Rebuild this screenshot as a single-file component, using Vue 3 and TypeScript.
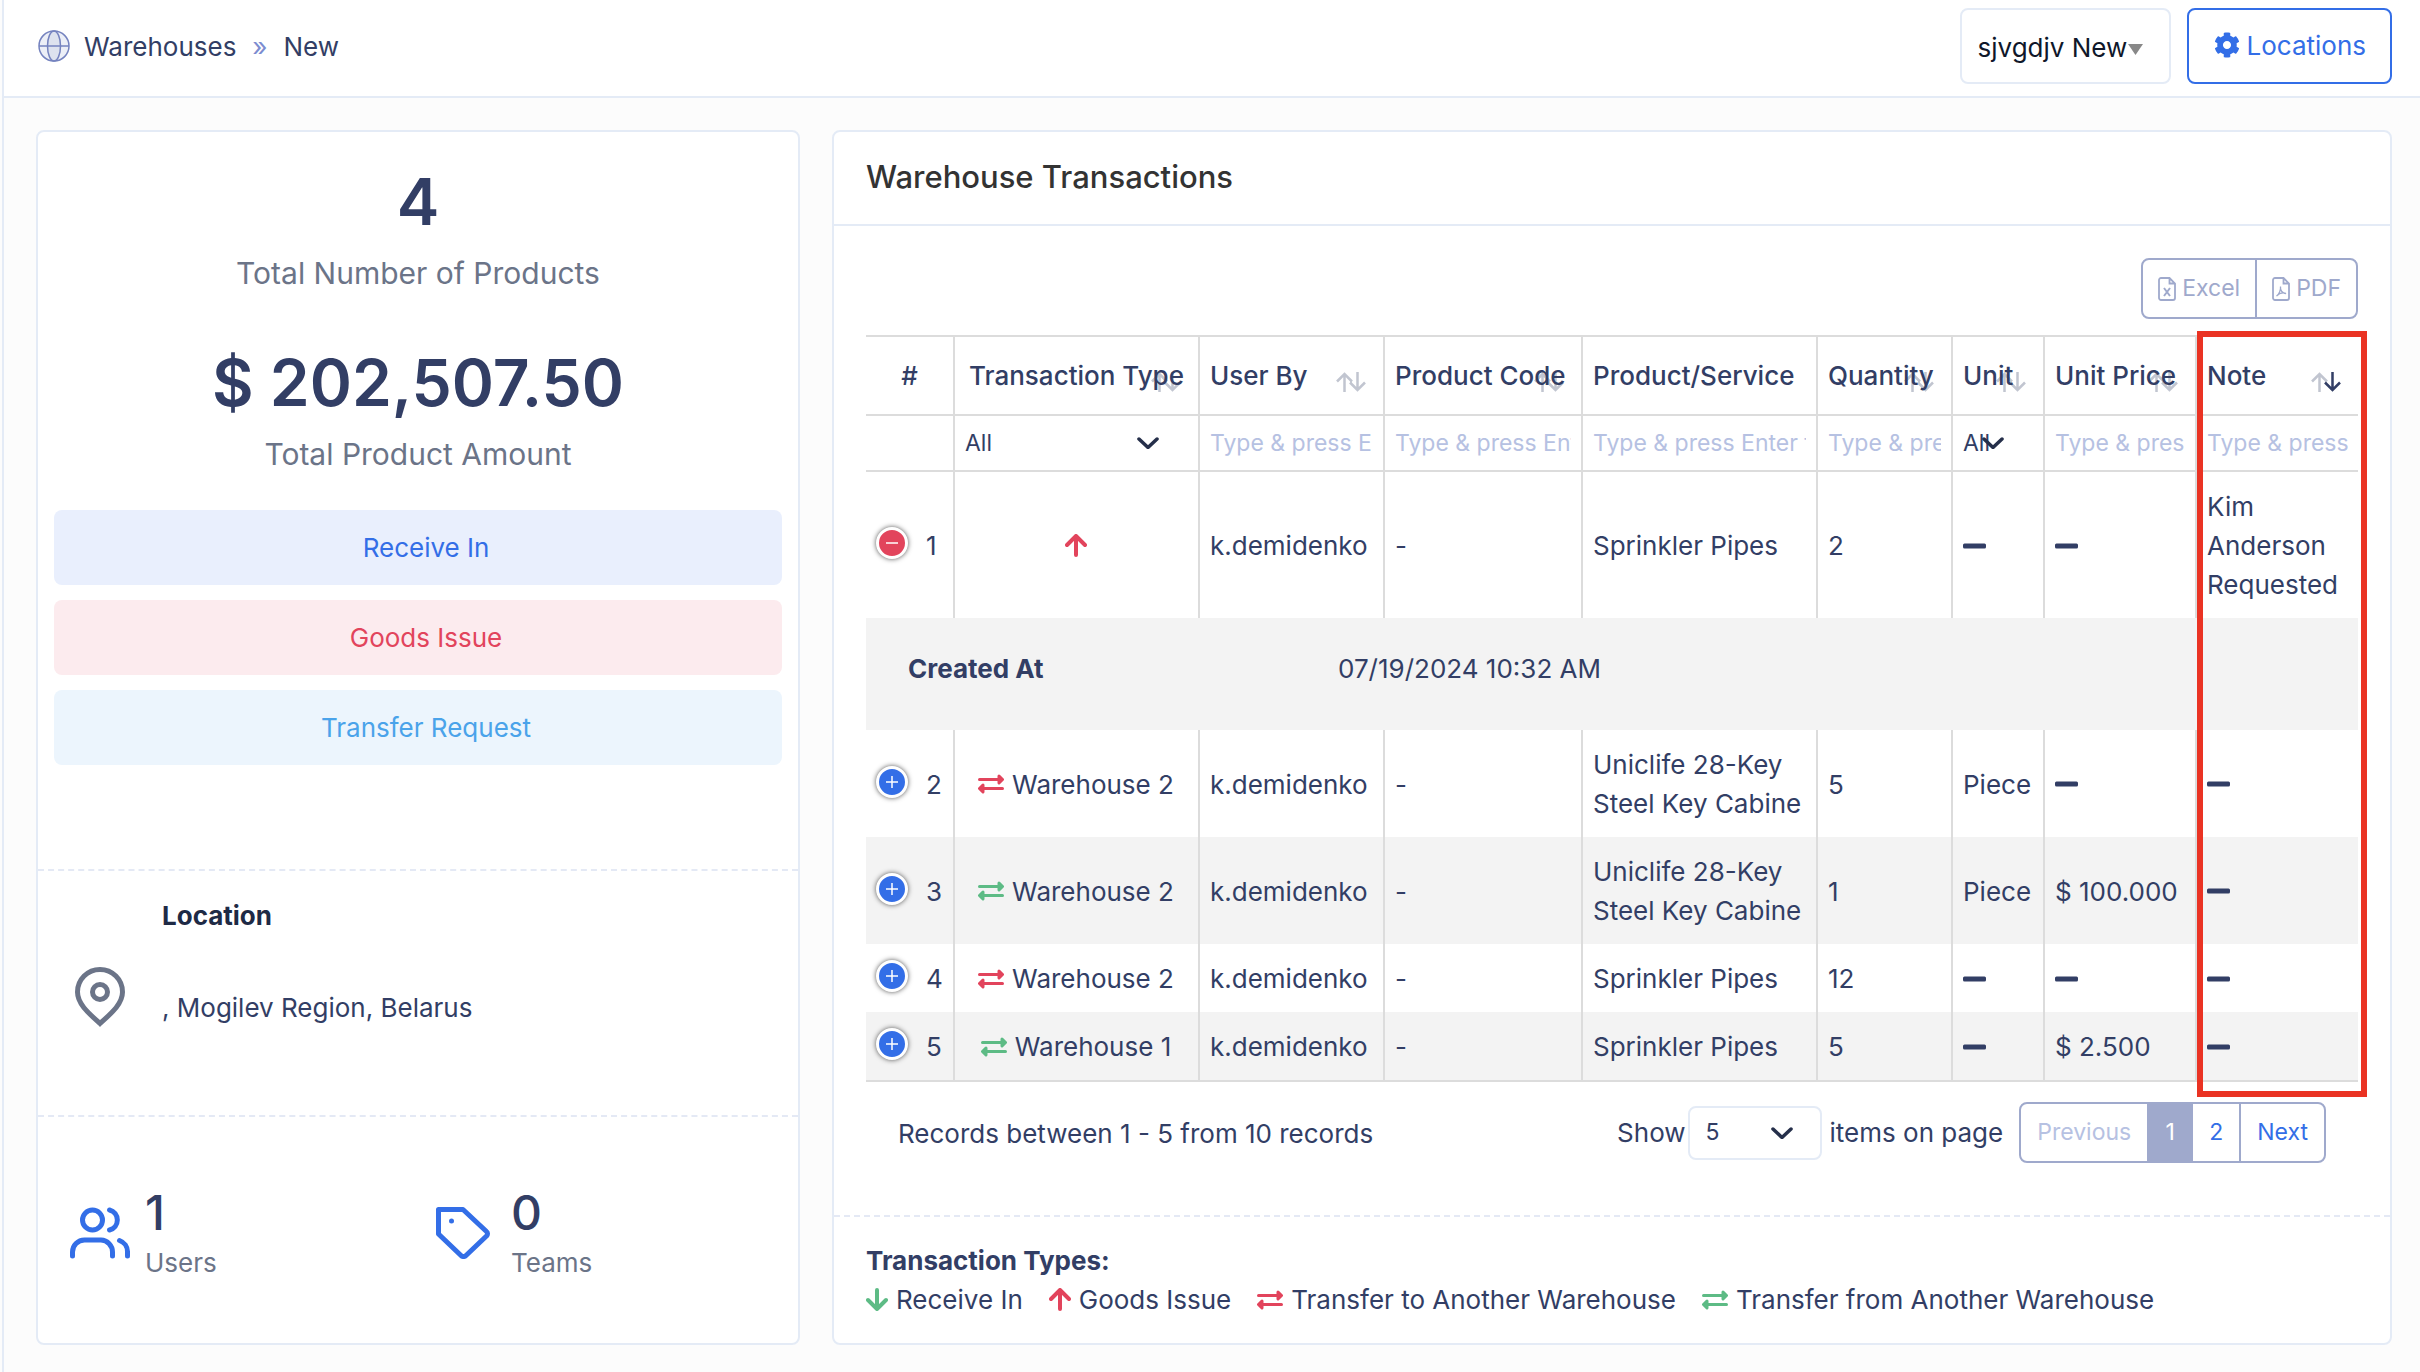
<script setup lang="ts">
import { ref } from 'vue'

type Kind = 'in' | 'out' | 'to' | 'from'

interface Column {
  label: string
  width: number
  filter: 'none' | 'select' | 'text'
  sort: 'none' | 'idle' | 'desc'
  centered?: boolean
}

interface Row {
  id: number
  kind: Kind
  target: string
  user: string
  code: string
  product: string
  quantity: string
  unit: string
  price: string
  note: string
  createdAt?: string
}

const columns: Column[] = [
  { label: '#', width: 89, filter: 'none', sort: 'none', centered: true },
  { label: 'Transaction Type', width: 245, filter: 'select', sort: 'idle', centered: true },
  { label: 'User By', width: 185, filter: 'text', sort: 'idle' },
  { label: 'Product Code', width: 198, filter: 'text', sort: 'idle' },
  { label: 'Product/Service', width: 235, filter: 'text', sort: 'none' },
  { label: 'Quantity', width: 135, filter: 'text', sort: 'idle' },
  { label: 'Unit', width: 92, filter: 'select', sort: 'idle' },
  { label: 'Unit Price', width: 152, filter: 'text', sort: 'idle' },
  { label: 'Note', width: 161, filter: 'text', sort: 'desc' },
]

const rows: Row[] = [
  { id: 1, kind: 'out', target: '', user: 'k.demidenko', code: '-', product: 'Sprinkler Pipes', quantity: '2', unit: '', price: '', note: 'Kim Anderson Requested', createdAt: '07/19/2024 10:32 AM' },
  { id: 2, kind: 'to', target: 'Warehouse 2', user: 'k.demidenko', code: '-', product: 'Uniclife 28-Key Steel Key Cabine', quantity: '5', unit: 'Piece', price: '', note: '' },
  { id: 3, kind: 'from', target: 'Warehouse 2', user: 'k.demidenko', code: '-', product: 'Uniclife 28-Key Steel Key Cabine', quantity: '1', unit: 'Piece', price: '$ 100.000', note: '' },
  { id: 4, kind: 'to', target: 'Warehouse 2', user: 'k.demidenko', code: '-', product: 'Sprinkler Pipes', quantity: '12', unit: '', price: '', note: '' },
  { id: 5, kind: 'from', target: 'Warehouse 1', user: 'k.demidenko', code: '-', product: 'Sprinkler Pipes', quantity: '5', unit: '', price: '$ 2.500', note: '' },
]

const legend: { kind: Kind; label: string }[] = [
  { kind: 'in', label: 'Receive In' },
  { kind: 'out', label: 'Goods Issue' },
  { kind: 'to', label: 'Transfer to Another Warehouse' },
  { kind: 'from', label: 'Transfer from Another Warehouse' },
]

const arrowPaths: Record<'in' | 'out', string> = {
  in: 'M11 2V21M2 12L11 21L20 12',
  out: 'M11 21V2M2 11L11 2L20 11',
}

const openRow = ref(1)
const toggle = (id: number) => {
  openRow.value = openRow.value === id ? 0 : id
}
const cells = (row: Row) => [row.user, row.code, row.product, row.quantity, row.unit, row.price, row.note]
</script>

<template>
  <div class="page">
    <header class="topbar">
      <nav class="crumbs" aria-label="Breadcrumb">
        <svg class="globe" viewBox="0 0 32 32" width="32" height="32" aria-hidden="true">
          <circle cx="16" cy="16" r="15" fill="#eceff7" />
          <ellipse cx="16" cy="16" rx="7" ry="15" fill="#dde2ee" />
          <g fill="none" stroke="#7583bf" stroke-width="1.5">
            <circle cx="16" cy="16" r="15" />
            <ellipse cx="16" cy="16" rx="6.5" ry="15" />
            <path d="M1 16H31" />
          </g>
        </svg>
        <a href="#warehouses">Warehouses</a>
        <span class="sep">»</span>
        <span>New</span>
      </nav>
      <div class="top-actions">
        <div class="site-picker">
          <select aria-label="Warehouse">
            <option>sjvgdjv New</option>
          </select>
          <svg viewBox="0 0 15 11" width="15" height="11" aria-hidden="true"><path d="M0 0H15L7.500 11Z" fill="#888" /></svg>
        </div>
        <button class="locations" type="button">
          <svg viewBox="0 0 512 512" width="26" height="26" fill="currentColor" aria-hidden="true">
            <path d="M487.4 315.7l-42.6-24.6c4.3-23.2 4.3-47 0-70.2l42.6-24.6c4.9-2.8 7.1-8.6 5.5-14-11.1-35.6-30-67.8-54.7-94.6-3.8-4.1-10-5.1-14.8-2.3L380.8 110c-17.9-15.4-38.5-27.3-60.8-35.1V25.8c0-5.6-3.9-10.5-9.4-11.7-36.7-8.2-74.3-7.8-109.2 0-5.5 1.2-9.4 6.1-9.4 11.7V75c-22.2 7.9-42.8 19.8-60.8 35.1L88.7 85.5c-4.9-2.8-11-1.9-14.8 2.3-24.7 26.7-43.6 58.9-54.7 94.6-1.7 5.4.6 11.2 5.5 14L67.3 221c-4.3 23.2-4.3 47 0 70.2l-42.6 24.6c-4.9 2.8-7.1 8.6-5.5 14 11.1 35.6 30 67.8 54.7 94.6 3.8 4.1 10 5.1 14.8 2.3l42.6-24.6c17.9 15.4 38.5 27.3 60.8 35.1v49.2c0 5.6 3.9 10.5 9.4 11.7 36.7 8.2 74.3 7.8 109.2 0 5.5-1.2 9.4-6.1 9.4-11.7v-49.2c22.2-7.9 42.8-19.8 60.8-35.1l42.6 24.6c4.9 2.8 11 1.9 14.8-2.3 24.7-26.7 43.6-58.9 54.7-94.6 1.5-5.5-.7-11.3-5.6-14.1zM256 336c-44.1 0-80-35.9-80-80s35.9-80 80-80 80 35.9 80 80-35.9 80-80 80z" />
          </svg>
          Locations
        </button>
      </div>
    </header>

    <main class="content">
      <section class="card summary">
        <div class="totals">
          <div class="total">
            <strong>4</strong>
            <span>Total Number of Products</span>
          </div>
          <div class="total">
            <strong>$ 202,507.50</strong>
            <span>Total Product Amount</span>
          </div>
          <div class="actions">
            <button type="button" class="soft blue">Receive In</button>
            <button type="button" class="soft red">Goods Issue</button>
            <button type="button" class="soft sky">Transfer Request</button>
          </div>
        </div>
        <div class="location">
          <svg viewBox="0 0 50 60" width="50" height="60" fill="none" stroke="#6b7488" stroke-width="5" aria-hidden="true">
            <path d="M25 56.5C14 46.500 2.500 37 2.500 25A22.500 22.500 0 0 1 47.500 25C47.500 37 36 46.500 25 56.500Z" />
            <circle cx="25" cy="25" r="7.500" />
          </svg>
          <div class="address">
            <h2>Location</h2>
            <p>, Mogilev Region, Belarus</p>
          </div>
        </div>
        <div class="counts">
          <div class="count">
            <svg viewBox="0 0 60 52" width="60" height="52" fill="none" stroke="#336ee7" stroke-width="5" stroke-linecap="round" aria-hidden="true">
              <circle cx="22.5" cy="13" r="10" />
              <path d="M2.5 49V45A12 12 0 0 1 14.500 33H31A12 12 0 0 1 42.500 45V49M39.500 3A10.300 10.300 0 0 1 39.500 23M49.500 33.500A12 12 0 0 1 57.500 45V49" />
            </svg>
            <div>
              <strong>1</strong>
              <span>Users</span>
            </div>
          </div>
          <div class="count">
            <svg viewBox="0 0 60 52" width="60" height="52" fill="none" stroke="#336ee7" stroke-width="5" stroke-linejoin="round" aria-hidden="true">
              <path d="M2.500 2.500H27L50.500 24.500A3 3 0 0 1 50.500 29L30 48.500A3.500 3.500 0 0 1 25 48.500L2.500 27Z" />
              <circle cx="15.500" cy="14" r="2.500" fill="#336ee7" stroke="none" />
            </svg>
            <div>
              <strong>0</strong>
              <span>Teams</span>
            </div>
          </div>
        </div>
      </section>

      <section class="card transactions">
        <h1>Warehouse Transactions</h1>
        <div class="body">
          <div class="export">
            <button type="button">
              <svg viewBox="0 0 18 24" width="18" height="24" fill="none" stroke="currentColor" stroke-width="1.800" aria-hidden="true">
                <path d="M3 1H11.500L17 6.500V21A2 2 0 0 1 15 23H3A2 2 0 0 1 1 21V3A2 2 0 0 1 3 1ZM11.500 1V6.500H17" />
                <path d="M6 11L12 19M12 11L6 19" stroke-width="2" />
              </svg>
              Excel
            </button>
            <button type="button">
              <svg viewBox="0 0 18 24" width="18" height="24" fill="none" stroke="currentColor" stroke-width="1.800" aria-hidden="true">
                <path d="M3 1H11.500L17 6.500V21A2 2 0 0 1 15 23H3A2 2 0 0 1 1 21V3A2 2 0 0 1 3 1ZM11.500 1V6.500H17" />
                <path d="M8.500 9.500C8 13.500 10.500 16.500 14 16.500C10 15 7 16.500 4.500 19C7 17.500 9 13 8.500 9.500" stroke-width="1.300" />
              </svg>
              PDF
            </button>
          </div>

          <div class="table-wrap">
            <table>
              <colgroup>
                <col v-for="c in columns" :key="c.label" :style="{ width: c.width + 'px' }" />
              </colgroup>
              <thead>
                <tr class="heads">
                  <th v-for="c in columns" :key="c.label" scope="col" :class="{ centered: c.centered }">
                    {{ c.label }}
                    <svg v-if="c.sort !== 'none'" class="sort" viewBox="0 0 30 20" width="30" height="20" fill="none" stroke="#323e65" stroke-width="2.500" aria-hidden="true">
                      <path d="M8.500 20V2M1 9.500L8.500 2L16 9.500" opacity="0.3" />
                      <path d="M21.500 0V18M14 10.500L21.500 18L29 10.500" :opacity="c.sort === 'desc' ? 1 : 0.3" />
                    </svg>
                  </th>
                </tr>
                <tr class="filters">
                  <td v-for="c in columns" :key="c.label">
                    <div v-if="c.filter === 'select'" class="picker">
                      <select :aria-label="c.label + ' filter'">
                        <option>All</option>
                      </select>
                      <svg class="chevron" viewBox="0 0 22 12" width="22" height="12" aria-hidden="true"><path d="M2 2L11 10.500L20 2" /></svg>
                    </div>
                    <input v-else-if="c.filter === 'text'" type="text" placeholder="Type &amp; press Enter for search" :aria-label="c.label + ' filter'" />
                  </td>
                </tr>
              </thead>
              <tbody>
                <template v-for="row in rows" :key="row.id">
                  <tr :class="{ striped: row.id === 3 || row.id === 5 }">
                    <td class="index">
                      <div>
                        <button type="button" :class="{ open: openRow === row.id }" :aria-label="'Details of row ' + row.id" @click="toggle(row.id)">
                          <svg viewBox="0 0 14 14" width="14" height="14" fill="none" stroke="#fff" stroke-width="1.500" aria-hidden="true">
                            <path :d="openRow === row.id ? 'M1 7H13' : 'M1 7H13M7 1V13'" />
                          </svg>
                        </button>
                        <span>{{ row.id }}</span>
                      </div>
                    </td>
                    <td class="type">
                      <span class="kind" :class="row.kind">
                        <svg v-if="row.kind === 'out' || row.kind === 'in'" viewBox="0 0 22 23" width="22" height="23" aria-hidden="true"><path class="arrow" :d="arrowPaths[row.kind]" /></svg>
                        <svg v-else viewBox="0 0 26 20" width="26" height="20" aria-hidden="true"><path class="swap" d="M1.500 5.500H21M24.500 14.500H5M21 2L24.500 5.500L21 9ZM5 11L1.500 14.500L5 18Z" /></svg>
                        <span v-if="row.target">{{ row.target }}</span>
                      </span>
                    </td>
                    <td v-for="(value, i) in cells(row)" :key="i">
                      <template v-if="value">{{ value }}</template>
                      <svg v-else class="dash" viewBox="0 0 23 6" width="23" height="6" role="img" aria-label="None"><rect width="23" height="5" y="0.500" rx="1.500" fill="#323e65" /></svg>
                    </td>
                  </tr>
                  <tr v-if="openRow === row.id && row.createdAt" class="detail">
                    <td colspan="9">
                      <dl>
                        <dt>Created At</dt>
                        <dd>{{ row.createdAt }}</dd>
                      </dl>
                    </td>
                  </tr>
                </template>
              </tbody>
            </table>
            <div class="marker"></div>
          </div>

          <div class="footer">
            <span class="records">Records between 1 - 5 from 10 records</span>
            <label class="page-size">
              Show
              <span class="picker boxed">
                <select>
                  <option>5</option>
                </select>
                <svg class="chevron" viewBox="0 0 22 12" width="22" height="12" aria-hidden="true"><path d="M2 2L11 10.500L20 2" /></svg>
              </span>
              <span class="suffix">items on page</span>
            </label>
            <nav class="pager" aria-label="Pages">
              <button type="button" disabled>Previous</button>
              <button type="button" class="current" aria-current="page">1</button>
              <button type="button">2</button>
              <button type="button">Next</button>
            </nav>
          </div>
        </div>
        <div class="legend">
          <h2>Transaction Types:</h2>
          <ul>
            <li v-for="item in legend" :key="item.kind" class="kind" :class="item.kind">
              <svg v-if="item.kind === 'out' || item.kind === 'in'" viewBox="0 0 22 23" width="22" height="23" aria-hidden="true"><path class="arrow" :d="arrowPaths[item.kind]" /></svg>
              <svg v-else viewBox="0 0 26 20" width="26" height="20" aria-hidden="true"><path class="swap" d="M1.500 5.500H21M24.500 14.500H5M21 2L24.500 5.500L21 9ZM5 11L1.500 14.500L5 18Z" /></svg>
              <span>{{ item.label }}</span>
            </li>
          </ul>
        </div>
      </section>
    </main>
  </div>
</template>

<style>
body {
  background: #fcfcfc;
}
</style>

<style scoped>
.page {
  box-sizing: border-box;
  min-height: 100vh;
  margin-left: 2px;
  border-left: 2px solid #e4ebf6;
  color: #323e65;
  font: 26px/39px Inter, "Liberation Sans", sans-serif;
}
.page *,
.page *::before {
  box-sizing: border-box;
}
h1, h2, p, dl, dd, ul {
  margin: 0;
  padding: 0;
}
button, select, input {
  font: inherit;
  color: inherit;
  margin: 0;
  padding: 0;
  border: 0;
  background: none;
  border-radius: 0;
  outline: none;
  cursor: pointer;
}
select {
  appearance: none;
}
svg {
  display: block;
  flex: none;
}

.topbar {
  display: flex;
  justify-content: space-between;
  padding: 8px 28px 12px 34px;
  background: #fff;
  border-bottom: 2px solid #e4ebf6;
}
.crumbs {
  display: flex;
  align-items: center;
}
.crumbs a {
  color: inherit;
  text-decoration: none;
}
.globe {
  margin-right: 14px;
}
.sep {
  margin: 0 16px;
  color: #7c8cd0;
}
.top-actions {
  display: flex;
  gap: 16px;
}
.site-picker {
  position: relative;
  display: flex;
}
.site-picker select {
  width: 211px;
  height: 76px;
  padding: 2px 0 0 16px;
  border: 2px solid #e4ebf6;
  border-radius: 8px;
  color: #0f172a;
}
.site-picker svg {
  position: absolute;
  right: 28px;
  top: 36px;
  pointer-events: none;
}
.locations {
  display: flex;
  align-items: center;
  gap: 7px;
  height: 76px;
  padding: 0 24px 2px 25px;
  border: 2px solid #336ee7;
  border-radius: 8px;
  color: #336ee7;
}

.content {
  display: grid;
  grid-template-columns: calc((100% - 64px) / 3) minmax(0, 1fr);
  gap: 32px;
  padding: 32px 28px 27px 32px;
}
.card {
  background: #fff;
  border: 2px solid #e4ebf6;
  border-radius: 8px;
}

.summary {
  display: flex;
  flex-direction: column;
}
.totals {
  flex: 1;
  padding: 31px 16px 0;
}
.total {
  display: flex;
  flex-direction: column;
  align-items: center;
  gap: 10px;
  margin-bottom: 48px;
}
.total strong {
  font-size: 64px;
  font-weight: 600;
  line-height: 78px;
}
.total span {
  font-size: 30px;
  line-height: 45px;
  color: #6b7488;
}
.actions {
  display: flex;
  flex-direction: column;
  gap: 15px;
  margin-top: -15px;
}
.soft {
  height: 75px;
  padding: 0 0 1px 16px;
  border-radius: 8px;
}
.blue {
  background: #e9effd;
  color: #336ee7;
}
.red {
  background: #fcebee;
  color: #e2445c;
}
.sky {
  background: #ecf5fd;
  color: #4aa3ea;
}
.location {
  display: flex;
  align-items: flex-end;
  gap: 37px;
  padding: 25px 37px 88px;
  border-top: 2px dashed #e4e9f5;
}
.address {
  display: flex;
  flex-direction: column;
  gap: 53px;
}
.address h2 {
  font: inherit;
  font-weight: 700;
  color: #1e2a45;
}
.counts {
  display: grid;
  grid-template-columns: 1fr 1fr;
  column-gap: 4px;
  padding: 66px 0 61px 32px;
  border-top: 2px dashed #e4e9f5;
}
.count {
  display: flex;
  align-items: center;
  gap: 15px;
}
.count div {
  display: flex;
  flex-direction: column;
}
.count strong {
  font-size: 48px;
  font-weight: 500;
  line-height: 60px;
}
.count span {
  color: #6b7488;
}

.transactions {
  display: flex;
  flex-direction: column;
}
.transactions h1 {
  padding: 25px 32px 28px;
  border-bottom: 2px solid #e4ebf6;
  font: inherit;
  font-size: 31px;
  font-weight: 500;
  color: #333;
}
.body {
  flex: 1;
  padding: 32px 32px 0;
}
.export {
  display: flex;
  justify-content: flex-end;
  margin-bottom: 16px;
  font-size: 23px;
  color: #9fa9cc;
}
.export button {
  display: flex;
  align-items: center;
  gap: 6px;
  height: 61px;
  padding: 0 15px;
  border: 2px solid #9fa9cc;
}
.export button:first-child {
  border-radius: 8px 0 0 8px;
}
.export button:last-child {
  margin-left: -2px;
  border-radius: 0 8px 8px 0;
}

.table-wrap {
  position: relative;
}
table {
  width: 100%;
  table-layout: fixed;
  border-collapse: separate;
  border-spacing: 0;
  border-top: 2px solid #dcdcdc;
  border-bottom: 2px solid #dcdcdc;
}
th, td {
  padding: 15px 6px 14px 10px;
  border-right: 2px solid #dcdcdc;
  text-align: left;
  vertical-align: middle;
}
th:last-child, td:last-child {
  border-right: 0;
}
.heads th {
  position: relative;
  height: 79px;
  padding: 0 10px;
  border-bottom: 2px solid #dcdcdc;
  font-weight: 500;
  white-space: nowrap;
}
.heads .centered {
  text-align: center;
}
.sort {
  position: absolute;
  right: 17px;
  top: 35px;
}
.filters td {
  height: 56px;
  padding: 0 10px;
  border-bottom: 2px solid #dcdcdc;
  font-size: 23px;
  line-height: 36px;
}
.filters input, .picker select {
  display: block;
  width: 100%;
  height: 36px;
}
.filters input::placeholder {
  color: #b6c1e2;
  opacity: 1;
}
.picker {
  position: relative;
}
.chevron {
  position: absolute;
  right: 29px;
  top: 12px;
  pointer-events: none;
}
.chevron path {
  fill: none;
  stroke: #252f4a;
  stroke-width: 3.5;
  stroke-linecap: round;
  stroke-linejoin: round;
}
.striped td, .detail td {
  background: #f3f3f3;
}
.index div {
  display: flex;
  align-items: center;
  gap: 18px;
}
.index button {
  display: flex;
  align-items: center;
  justify-content: center;
  flex: none;
  width: 32px;
  height: 32px;
  margin-bottom: 5px;
  border: 3px solid #fff;
  border-radius: 50%;
  background: #336ee7;
  box-shadow: 0 0 5px #555;
}
.index .open {
  background: #e2445c;
}
.type {
  padding-left: 5px;
}
.kind {
  display: flex;
  align-items: center;
  justify-content: center;
  gap: 8px;
}
.arrow, .swap {
  fill: none;
  stroke-width: 4;
  stroke-linecap: round;
  stroke-linejoin: round;
}
.swap {
  stroke-width: 3;
}
.in path, .from path {
  stroke: #5dbb85;
}
.out path, .to path {
  stroke: #e2445c;
}
.from .swap {
  fill: #5dbb85;
}
.to .swap {
  fill: #e2445c;
}
.detail td {
  padding: 31px 42px 42px;
}
.detail dl {
  display: flex;
}
.detail dt {
  width: 430px;
  font-weight: 700;
}
.marker {
  position: absolute;
  top: -4px;
  right: -9px;
  bottom: -15px;
  width: calc(11% + 6px);
  border: 6px solid #ea3323;
  pointer-events: none;
}

.footer {
  display: flex;
  align-items: center;
  padding: 20px 32px 52px;
}
.records {
  margin-right: auto;
  padding-top: 2px;
}
.page-size {
  display: flex;
  align-items: center;
}
.boxed {
  margin: 0 8px 0 2px;
  font-size: 23px;
}
.boxed select {
  width: 134px;
  height: 54px;
  padding-left: 16px;
  border: 2px solid #e4ebf6;
  border-radius: 8px;
}
.boxed .chevron {
  top: 21px;
}
.pager {
  display: flex;
  margin-left: 16px;
  border: 2px solid #9fa9cc;
  border-radius: 8px;
  font-size: 23px;
}
.pager button {
  min-width: 46px;
  height: 57px;
  padding: 0 16px;
  color: #336ee7;
}
.pager button:disabled {
  color: #b6c1e2;
}
.pager .current {
  background: #9fa9cc;
  color: #fff;
}
.pager button:last-child {
  border-left: 2px solid #9fa9cc;
}

.legend {
  padding: 24px 32px;
  border-top: 2px dashed #e4e9f5;
}
.legend h2 {
  font: inherit;
  font-weight: 700;
}
.legend ul {
  display: flex;
  flex-wrap: wrap;
  gap: 0 26px;
  list-style: none;
}
</style>
